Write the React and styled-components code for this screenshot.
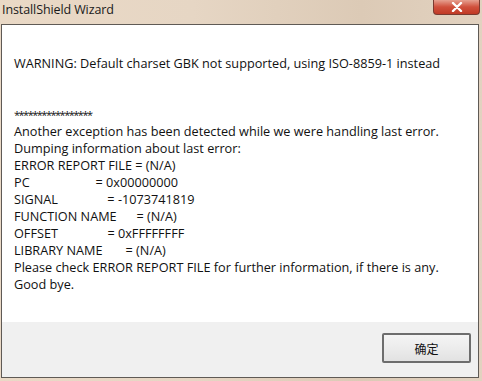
import React from "react";
import styled, { createGlobalStyle } from "styled-components";

const GlobalStyle = createGlobalStyle`
  html, body {
    margin: 0;
    padding: 0;
    width: 482px;
    height: 381px;
    overflow: hidden;
  }
`;

const Frame = styled.div`
  width: 482px;
  height: 381px;
  box-sizing: border-box;
  display: flex;
  flex-direction: column;
  padding: 0 3px 3px 1px;
  background: linear-gradient(90deg, #ead9c6 0%, #e6d6c4 40%, #dccab6 75%, #e2d2c0 100%);
  font-family: "Open Sans", "Noto Sans", sans-serif;
`;

const TitleBar = styled.div`
  height: 24px;
  display: flex;
  align-items: flex-start;
  justify-content: space-between;
`;

const Title = styled.span`
  font-size: 12.5px;
  color: #1a1a1a;
  padding: 1px 0 0 1px;
  letter-spacing: -0.1px;
`;

const CloseButton = styled.div`
  width: 45px;
  height: 14px;
  margin-right: -1px;
  border: 1px solid #7a3a30;
  border-top: none;
  border-radius: 0 0 4px 4px;
  background: linear-gradient(180deg, #e6a090 0%, #d0503c 50%, #c03a26 100%);
  display: flex;
  align-items: center;
  justify-content: center;
`;

const Client = styled.div`
  flex: 1;
  display: flex;
  flex-direction: column;
  border: 1px solid #5f5a55;
  background: #ffffff;
`;

const Message = styled.pre`
  flex: 1;
  margin: 0;
  padding: 30px 12px 0 12px;
  font-family: "Open Sans", "Noto Sans", sans-serif;
  font-size: 12.7px;
  line-height: 17px;
  color: #111;
  white-space: pre;
`;

const Stars = styled.span`
  font-size: 11px;
  letter-spacing: -1.5px;
`;

const Footer = styled.div`
  height: 55px;
  box-sizing: border-box;
  background: #f0f0f0;
  display: flex;
  justify-content: flex-end;
  padding: 11px 7px 0 0;
`;

const OkButton = styled.button`
  width: 89px;
  height: 30px;
  box-sizing: border-box;
  border: 2px solid #6d6d6d;
  border-radius: 2px;
  background: linear-gradient(180deg, #f4f4f4 0%, #ececec 50%, #e2e2e2 100%);
  font-family: "Noto Sans CJK SC", sans-serif;
  font-size: 12px;
  color: #111;
  padding: 0;
`;

const before = `WARNING: Default charset GBK not supported, using ISO-8859-1 instead


`;

const after = `
Another exception has been detected while we were handling last error.
Dumping information about last error:
ERROR REPORT FILE = (N/A)
PC                    = 0x00000000
SIGNAL               = -1073741819
FUNCTION NAME      = (N/A)
OFFSET               = 0xFFFFFFFF
LIBRARY NAME       = (N/A)
Please check ERROR REPORT FILE for further information, if there is any.
Good bye.`;

export default function App() {
  return (
    <>
      <GlobalStyle />
      <Frame>
        <TitleBar>
          <Title>InstallShield Wizard</Title>
          <CloseButton>
            <svg width="12" height="10" viewBox="0 0 12 10">
              <path d="M2 1 L10 9 M10 1 L2 9" stroke="#ffffff" strokeWidth="2.4" strokeLinecap="round" />
            </svg>
          </CloseButton>
        </TitleBar>
        <Client>
          <Message>
            {before}
            <Stars>*****************</Stars>
            {after}
          </Message>
          <Footer>
            <OkButton>确定</OkButton>
          </Footer>
        </Client>
      </Frame>
    </>
  );
}
